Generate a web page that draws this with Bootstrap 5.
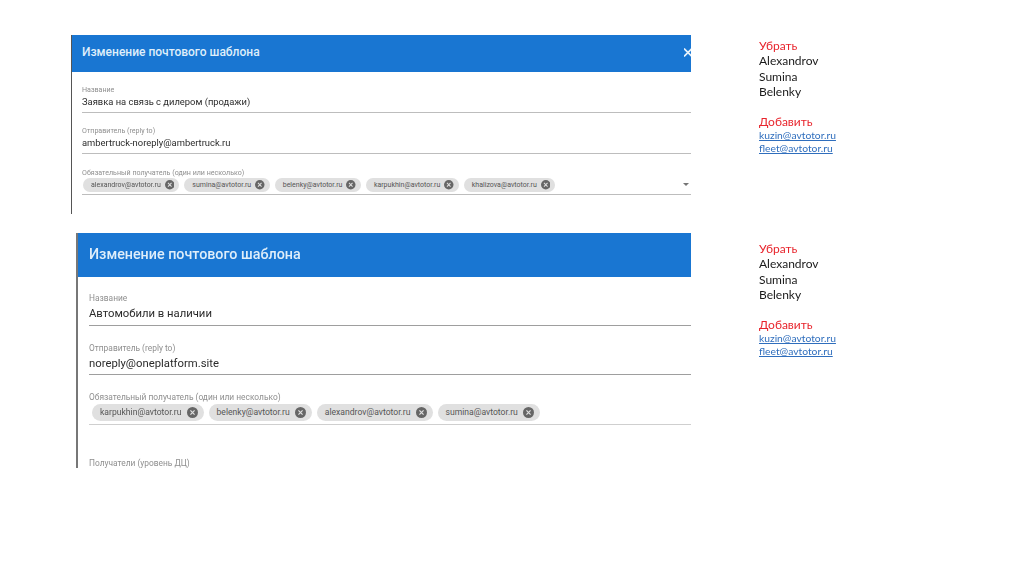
<!DOCTYPE html>
<html lang="ru">
<head>
<meta charset="utf-8">
<title>Изменение почтового шаблона</title>
<link href="https://cdn.jsdelivr.net/npm/bootstrap@5.3.0/dist/css/bootstrap.min.css" rel="stylesheet">
<style>
html,body{height:100%;overflow:hidden;background:#fff}
body{font-family:Roboto,"Liberation Sans",sans-serif;color:#2b2b2b}
.slide{height:574px;padding-top:35px;filter:blur(.35px)}
.block-a{height:198px}
.block-b{height:341px}
.pane{flex:none;width:620px;margin-left:71px;border-left:1px solid #555}
.pane-b{width:615px;margin-left:76px;border-left-width:2px;border-left-color:#777}
.pane-head{background:#1976d2;color:#dfeefa;font-weight:500;height:37px;padding-left:10px;overflow:hidden}
.pane-a .pane-head{font-size:12px;padding-bottom:3px}
.pane-b .pane-head{height:44px;padding-left:11px;font-size:14.3px}
.close-x{margin-right:-1px;width:8px;height:9px}
.pane-a .pane-body{padding:13px 0 0 10px;height:142px}
.pane-b .pane-body{padding:16px 0 0 11px;height:191px;overflow:hidden}
.fld{border-bottom:1px solid #bdbdbd}
.lbl{color:#8f8f8f;font-size:7.1px;line-height:9px}
.val{font-size:9.4px;line-height:14px;padding-top:1px}
.pane-a .fld{height:28px}
.pane-a .fld-mid{height:41px;padding-top:13px}
.pane-a .fld-chips{height:41px;padding-top:14px}
.chip-row{gap:5px;padding:1px 0 0 1px}
.chip{display:inline-flex;align-items:center;background:#e0e0e0;border-radius:8px;height:14px;padding:0 5px 0 8px;font-size:7px;color:#555;gap:4px;white-space:nowrap}
.chip svg{width:9.5px;height:9.5px;flex:none}
.pane-b .lbl{font-size:8.4px;line-height:11px}
.pane-b .val{font-size:11.3px;line-height:16px;padding-top:2px}
.pane-b .fld{border-bottom-color:#9e9e9e;height:33px}
.pane-b .fld-mid{height:49px;padding-top:17px}
.pane-b .fld-chips{height:50px;padding-top:17px;border-bottom-color:#cfcfcf}
.pane-b .chip-row{gap:5px;padding:1px 0 0 3px}
.pane-b .chip{height:17px;border-radius:9px;font-size:8.6px;padding:0 6px 0 8px;gap:5px}
.pane-b .chip svg{width:11px;height:11px}
.pane-b .lbl-last{margin-top:33px;line-height:10px}
.side{margin-left:68px;font-family:Lato,"Liberation Sans",sans-serif;font-size:12px;line-height:15.4px;color:#1a1a1a;padding-top:3px}
.pane-b+.side{padding-top:8px}
.side-red{color:#e8242c}
.side-gap{margin-top:15px;line-height:14.5px}
.side-link{color:#2f6ebd;font-size:10.3px;line-height:13px;display:block;text-decoration:underline}
.caret-dn{width:0;height:0;border-left:3px solid transparent;border-right:3px solid transparent;border-top:3px solid #757575;margin-right:2px}
</style>
</head>
<body>
<div class="slide">
  <div class="block-a d-flex align-items-start">
    <div class="pane pane-a">
      <div class="pane-head d-flex align-items-center justify-content-between">
        <span>Изменение почтового шаблона</span>
        <svg class="close-x" viewBox="0 0 8 9"><path d="M0 .5 8 8.5M8 .5 0 8.5" stroke="#e9f3fb" stroke-width="1.6"/></svg>
      </div>
      <div class="pane-body">
        <div class="fld"><div class="lbl">Название</div><div class="val">Заявка на связь с дилером (продажи)</div></div>
        <div class="fld fld-mid"><div class="lbl">Отправитель (reply to)</div><div class="val">ambertruck-noreply@ambertruck.ru</div></div>
        <div class="fld fld-chips">
          <div class="lbl">Обязательный получатель (один или несколько)</div>
          <div class="d-flex align-items-center justify-content-between">
            <div class="chip-row d-flex">
              <span class="chip">alexandrov@avtotor.ru <svg viewBox="0 0 24 24"><circle cx="12" cy="12" r="12" fill="#666"/><path d="M7.5 7.500l9 9M16.500 7.500l-9 9" stroke="#e0e0e0" stroke-width="2.600"/></svg></span>
              <span class="chip">sumina@avtotor.ru <svg viewBox="0 0 24 24"><circle cx="12" cy="12" r="12" fill="#666"/><path d="M7.5 7.500l9 9M16.500 7.500l-9 9" stroke="#e0e0e0" stroke-width="2.600"/></svg></span>
              <span class="chip">belenky@avtotor.ru <svg viewBox="0 0 24 24"><circle cx="12" cy="12" r="12" fill="#666"/><path d="M7.5 7.500l9 9M16.500 7.500l-9 9" stroke="#e0e0e0" stroke-width="2.600"/></svg></span>
              <span class="chip">karpukhin@avtotor.ru <svg viewBox="0 0 24 24"><circle cx="12" cy="12" r="12" fill="#666"/><path d="M7.5 7.500l9 9M16.500 7.500l-9 9" stroke="#e0e0e0" stroke-width="2.600"/></svg></span>
              <span class="chip">khalizova@avtotor.ru <svg viewBox="0 0 24 24"><circle cx="12" cy="12" r="12" fill="#666"/><path d="M7.5 7.500l9 9M16.500 7.500l-9 9" stroke="#e0e0e0" stroke-width="2.600"/></svg></span>
            </div>
            <span class="caret-dn"></span>
          </div>
        </div>
      </div>
    </div>
    <div class="side">
      <div class="side-red">Убрать</div>
      <div>Alexandrov</div><div>Sumina</div><div>Belenky</div>
      <div class="side-red side-gap">Добавить</div>
      <a class="side-link" href="#">kuzin@avtotor.ru</a>
      <a class="side-link" href="#">fleet@avtotor.ru</a>
    </div>
  </div>
  <div class="block-b d-flex align-items-start">
    <div class="pane pane-b">
      <div class="pane-head d-flex align-items-center"><span>Изменение почтового шаблона</span></div>
      <div class="pane-body">
        <div class="fld"><div class="lbl">Название</div><div class="val">Автомобили в наличии</div></div>
        <div class="fld fld-mid"><div class="lbl">Отправитель (reply to)</div><div class="val">noreply@oneplatform.site</div></div>
        <div class="fld fld-chips">
          <div class="lbl">Обязательный получатель (один или несколько)</div>
          <div class="chip-row d-flex">
            <span class="chip">karpukhin@avtotor.ru <svg viewBox="0 0 24 24"><circle cx="12" cy="12" r="12" fill="#666"/><path d="M7.5 7.500l9 9M16.500 7.500l-9 9" stroke="#e0e0e0" stroke-width="2.600"/></svg></span>
            <span class="chip">belenky@avtotor.ru <svg viewBox="0 0 24 24"><circle cx="12" cy="12" r="12" fill="#666"/><path d="M7.5 7.500l9 9M16.500 7.500l-9 9" stroke="#e0e0e0" stroke-width="2.600"/></svg></span>
            <span class="chip">alexandrov@avtotor.ru <svg viewBox="0 0 24 24"><circle cx="12" cy="12" r="12" fill="#666"/><path d="M7.5 7.500l9 9M16.500 7.500l-9 9" stroke="#e0e0e0" stroke-width="2.600"/></svg></span>
            <span class="chip">sumina@avtotor.ru <svg viewBox="0 0 24 24"><circle cx="12" cy="12" r="12" fill="#666"/><path d="M7.5 7.500l9 9M16.500 7.500l-9 9" stroke="#e0e0e0" stroke-width="2.600"/></svg></span>
          </div>
        </div>
        <div class="lbl lbl-last">Получатели (уровень ДЦ)</div>
      </div>
    </div>
    <div class="side">
      <div class="side-red">Убрать</div>
      <div>Alexandrov</div><div>Sumina</div><div>Belenky</div>
      <div class="side-red side-gap">Добавить</div>
      <a class="side-link" href="#">kuzin@avtotor.ru</a>
      <a class="side-link" href="#">fleet@avtotor.ru</a>
    </div>
  </div>
</div>
<script src="https://cdn.jsdelivr.net/npm/bootstrap@5.3.0/dist/js/bootstrap.bundle.min.js"></script>
</body>
</html>
